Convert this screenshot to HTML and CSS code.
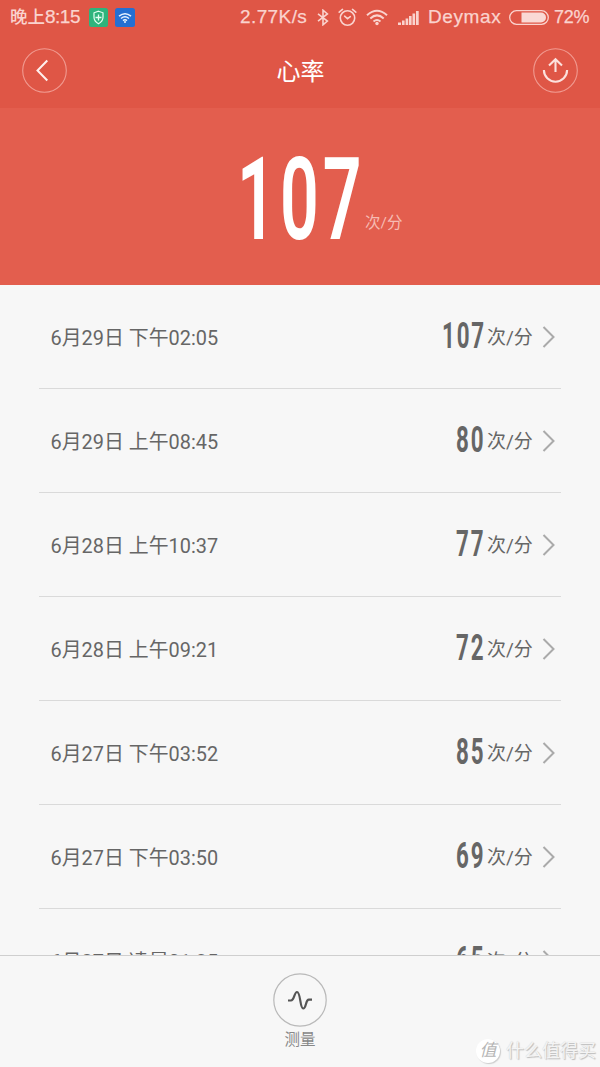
FILE: index.html
```html
<!DOCTYPE html>
<html lang="zh-CN">
<head>
<meta charset="utf-8">
<title>心率</title>
<link rel="stylesheet" href="styles.css">
</head>
<body>
<svg class="defs" width="0" height="0" aria-hidden="true">
  <symbol id="chevron" viewBox="0 0 14 24"><path d="M1.5 2 11.5 12 1.5 22" fill="none" stroke="#aaa" stroke-width="2"/></symbol>
</svg>
<div class="screen">
  <header class="top">
    <div class="status">
      <span class="clock">晚上<span class="latin">8:15</span></span>
      <svg class="app-shield" width="19" height="19" viewBox="0 0 19 19"><rect width="19" height="19" rx="2.5" fill="#2eb47c"/><path d="M9.5 3.2 14 4.8v4.400c0 3-1.800 5-4.500 6.500C6.800 14.200 5 12.200 5 9.200V4.800Z" fill="none" stroke="#e4fff2" stroke-width="1.200"/><path d="M9.500 6.500v6M6.500 9.500h6" stroke="#e4fff2" stroke-width="1.300"/></svg>
      <svg class="app-wifi" width="20" height="19" viewBox="0 0 20 19"><rect width="20" height="19" rx="2.500" fill="#246fd2"/><g fill="none" stroke="#e8f3ff" stroke-width="1.500"><path d="M4 8.200q6-5 12 0M6 10.500q4-3.400 8 0M8 12.600q2-1.600 4 0"/></g><circle cx="10" cy="13.900" r="1" fill="#e8f3ff"/></svg>
      <span class="speed latin">2.77K/s</span>
      <svg class="bluetooth" width="12" height="17" viewBox="0 0 12 17"><path d="M1 4.800 10.400 12 6 15.800V1.200L10.400 5 1 12.200" fill="none" stroke="#fad3ce" stroke-width="1.600"/></svg>
      <svg class="alarm" width="19" height="19" viewBox="0 0 19 19"><g fill="none" stroke="#fad3ce" stroke-width="1.600" stroke-linecap="round"><circle cx="9.500" cy="10" r="7.200"/><path d="M1.200 4.200 4.500 1.400M17.800 4.200 14.500 1.400M6.600 8.200 9.500 10.700 12.300 8.600"/></g></svg>
      <svg class="wifi" width="22" height="17" viewBox="0 0 22 17"><g fill="none" stroke="#fad3ce" stroke-width="2"><path d="M1 6.200Q11-2.800 21 6.200M4.300 9.400Q11 3.400 17.700 9.400M7.500 12.500Q11 9.600 14.500 12.500"/></g><circle cx="11" cy="14.500" r="1.700" fill="#fad3ce"/></svg>
      <svg class="signal" width="21" height="15" viewBox="0 0 21 15"><path d="M0 12.500h3V15H0zM4 10.500h2.600V15H4zM7.600 8.500h2.600V15H7.600zM11 6h2.600v9H11zM14.500 3.500h2.600V15h-2.600zM18 1h2.700v14H18z" fill="#fad3ce"/></svg>
      <span class="carrier latin">Deymax</span>
      <svg class="battery" width="40" height="15" viewBox="0 0 40 15"><rect x=".7" y=".7" width="38.600" height="13.600" rx="6.800" fill="none" stroke="#fad3ce" stroke-width="1.300"/><path d="M12.500 2.500H32a5 5 0 0 1 0 10H12.500Z" fill="#fad9d5"/></svg>
      <span class="percent latin">72%</span>
    </div>
    <nav class="nav">
      <svg width="46" height="46" viewBox="0 0 46 46"><circle cx="22.500" cy="23.500" r="21.800" fill="none" stroke="#f19b91" stroke-width="1.100"/><path d="M25.300 13.500 15.500 23.500l9.800 10" fill="none" stroke="#fff0ee" stroke-width="2"/></svg>
      <h1 class="title">心率</h1>
      <svg width="46" height="46" viewBox="0 0 46 46"><circle cx="22.500" cy="23.500" r="21.800" fill="none" stroke="#f19b91" stroke-width="1.100"/><g fill="none" stroke="#fce1dd" stroke-width="2.100"><path d="M10.900 23.100a11.600 11.600 0 0 0 23.200 0M22.500 25V12.500M16 18.500 22.500 12.200 29 18.500"/></g></svg>
    </nav>
  </header>
  <section class="hero">
    <span class="hero-value">107</span>
    <span class="hero-unit">次/分</span>
  </section>
  <main class="list">
    <div class="row"><span class="date">6月29日 下午02:05</span><span class="value">107</span><span class="unit">次/分</span><svg class="chev"><use href="#chevron"/></svg></div>
    <div class="row"><span class="date">6月29日 上午08:45</span><span class="value">80</span><span class="unit">次/分</span><svg class="chev"><use href="#chevron"/></svg></div>
    <div class="row"><span class="date">6月28日 上午10:37</span><span class="value">77</span><span class="unit">次/分</span><svg class="chev"><use href="#chevron"/></svg></div>
    <div class="row"><span class="date">6月28日 上午09:21</span><span class="value">72</span><span class="unit">次/分</span><svg class="chev"><use href="#chevron"/></svg></div>
    <div class="row"><span class="date">6月27日 下午03:52</span><span class="value">85</span><span class="unit">次/分</span><svg class="chev"><use href="#chevron"/></svg></div>
    <div class="row"><span class="date">6月27日 下午03:50</span><span class="value">69</span><span class="unit">次/分</span><svg class="chev"><use href="#chevron"/></svg></div>
    <div class="row"><span class="date">6月27日 凌晨01:35</span><span class="value">65</span><span class="unit">次/分</span><svg class="chev"><use href="#chevron"/></svg></div>
  </main>
  <footer class="bottom">
    <svg width="54" height="54" viewBox="0 0 54 54"><circle cx="27" cy="27" r="26.200" fill="none" stroke="#b9b9b9" stroke-width="1.200"/><path d="M15 27.500h3c3.400 0 3.200-8.500 6-8.500 3.800 0 2.800 16.500 6.200 16.500 3.200 0 2.200-8.800 5.600-8.800H39" fill="none" stroke="#555" stroke-width="2.200"/></svg>
    <span class="measure">测量</span>
    <div class="watermark"><span class="seal">值</span><span>什么值得买</span></div>
  </footer>
</div>
</body>
</html>
```

FILE: styles.css
```css
* { box-sizing: border-box; }
body { margin: 0; font-family: Roboto, "Noto Sans CJK SC", sans-serif; }
svg { display: block; flex: none; }
.defs { position: absolute; }
.screen { width: 600px; height: 1067px; display: flex; flex-direction: column; overflow: hidden; background: #f7f7f7; }
.top { flex: none; height: 108px; background: #df5646; }
.status { height: 34px; padding-left: 10px; display: flex; align-items: center; color: #fad3ce; font-size: 17.500px; white-space: nowrap; }
.latin { font-family: "Liberation Sans", sans-serif; font-size: 19px; line-height: 34px; -webkit-text-stroke: .25px #fad3ce; }
.clock { width: 79px; line-height: 34px; font-weight: 500; }
.clock .latin { font-weight: 400; letter-spacing: -.5px; }
.app-wifi { margin-left: 7px; }
.speed { width: 70px; margin-left: 105px; letter-spacing: .4px; }
.bluetooth { margin-left: 7px; }
.alarm { margin-left: 9px; }
.wifi { margin-left: 9px; }
.signal { margin-left: 10px; }
.carrier { width: 76px; margin-left: 9px; letter-spacing: .6px; }
.battery { margin-left: 5px; }
.percent { margin-left: 5px; font-size: 18px; letter-spacing: -.3px; }
.nav { height: 74px; padding: 0 21px 2px 22px; display: flex; align-items: center; justify-content: space-between; }
.title { margin: 0; color: #fff; font-family: "Noto Sans CJK SC", sans-serif; font-size: 24px; line-height: 34px; padding-bottom: 1px; font-weight: 400; }
.hero { flex: none; height: 177px; display: flex; color: #fff; background: #e35e4e; }
.hero-value { width: 128px; height: 130px; margin-left: 237px; padding-top: 25px; font-size: 115px; line-height: 134px; font-weight: 600; letter-spacing: 7px; transform: scaleX(.59); transform-origin: left; }
.hero-unit { padding-top: 104px; color: #f6bbb3; font-size: 15.500px; line-height: 22px; }
.list { flex: 1; min-height: 0; overflow: hidden; padding: 0 39px; }
.row { height: 104px; border-bottom: 1px solid #dadada; padding: 0 5px 0 11.500px; display: flex; align-items: center; color: #666; }
.date { flex: 1; font-size: 19.900px; line-height: 30px; padding-top: 4px; }
.value { font-size: 36px; line-height: 42px; padding-bottom: 1px; font-weight: 700; letter-spacing: 3px; margin-right: 1.500px; transform: scaleX(.62); transform-origin: right; }
.unit { width: 55px; padding-top: 2px; font-size: 19px; line-height: 28px; }
.chev { width: 14px; height: 24px; }
.bottom { position: relative; flex: none; height: 112px; padding-top: 17px; display: flex; flex-direction: column; align-items: center; border-top: 1px solid #cfcfcf; background: #f7f7f7; }
.measure { color: #888; font-size: 15.500px; line-height: 26px; }
.watermark { position: absolute; left: 476px; bottom: 4px; display: flex; align-items: center; gap: 6px; color: #f4f4f4; font-size: 18px; line-height: 25px; white-space: nowrap; text-shadow: 1px 1px 1px #bbb, 0 0 1px #ccc; }
.seal { width: 24px; height: 24px; border-radius: 50%; background: #fff; color: #b5b5b5; font-size: 17px; line-height: 23px; text-align: center; font-style: italic; text-shadow: none; box-shadow: 1px 1px 1px #ccc; }
```
